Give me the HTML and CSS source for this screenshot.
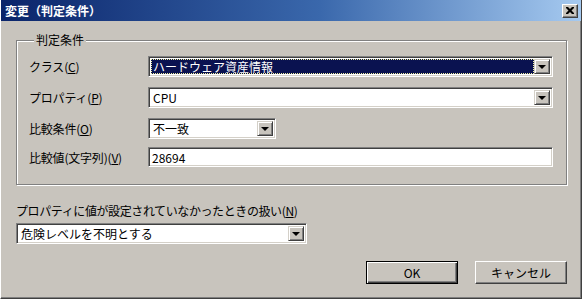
FILE: index.html
```html
<!DOCTYPE html>
<html lang="ja">
<head>
    <meta charset="UTF-8">
    <title>変更(判定条件)</title>
    <link rel="stylesheet" href="styles.css">
</head>
<body>
    <div class="window">
        <div class="titlebar">
            <span class="title">変更（判定条件）</span>
            <span class="close-btn">
                <svg width="8" height="7" viewBox="0 0 8 7"><path d="M0 0h2l2 2 2-2h2v1l-2.5 2.5L8 6v1H6L4 5 2 7H0V6l2.5-2.5L0 1z" fill="#000"/></svg>
            </span>
        </div>
        <div class="content">
            <fieldset class="group">
                <legend>判定条件</legend>
                <div class="form-grid">
                    <label>クラス(<u>C</u>)</label>
                    <div class="combo">
                        <span class="combo-text selected">ハードウェア資産情報</span>
                        <span class="combo-btn"><i class="arrow"></i></span>
                    </div>

                    <label>プロパティ(<u>P</u>)</label>
                    <div class="combo">
                        <span class="combo-text">CPU</span>
                        <span class="combo-btn"><i class="arrow"></i></span>
                    </div>

                    <label>比較条件(<u>O</u>)</label>
                    <div class="combo combo-short">
                        <span class="combo-text">不一致</span>
                        <span class="combo-btn"><i class="arrow"></i></span>
                    </div>

                    <label>比較値(文字列)(<u>V</u>)</label>
                    <div class="textbox">28694</div>
                </div>
            </fieldset>

            <div class="fallback">
                <label>プロパティに値が設定されていなかったときの扱い(<u>N</u>)</label>
                <div class="combo combo-fallback">
                    <span class="combo-text">危険レベルを不明とする</span>
                    <span class="combo-btn"><i class="arrow"></i></span>
                </div>
            </div>

            <div class="actions">
                <span class="btn btn-default">OK</span>
                <span class="btn">キャンセル</span>
            </div>
        </div>
    </div>
</body>
</html>
```

FILE: styles.css
```css
body { margin: 0; background: #c8c4bd; font-family: "Noto Sans CJK JP", "Liberation Sans", sans-serif; font-size: 12px; color: #000; }
.window { box-sizing: border-box; width: 582px; height: 299px; background: #c8c4bd; border-left: 1px solid #fff; border-right: 1px solid #404040; border-bottom: 1px solid #404040; box-shadow: inset -1px -1px #808080; display: flex; flex-direction: column; }
.titlebar { height: 21px; display: flex; align-items: center; justify-content: space-between; padding: 0 3px 0 4px; background: linear-gradient(to right, #0a246a, #3a68ac 55%, #a6caf0); }
.title { color: #fff; font-weight: bold; font-size: 12px; }
.close-btn { box-sizing: border-box; width: 16px; height: 14px; display: flex; align-items: center; justify-content: center; background: #c8c4bd; border: 1px solid; border-color: #fff #404040 #404040 #fff; box-shadow: inset -1px -1px #808080; }

.content { flex: 1; padding: 12px 14px 0 15px; display: flex; flex-direction: column; }

.group { margin: 0; padding: 9px 13px 17px 12px; border: 1px solid #808080; box-shadow: inset 1px 1px #fff, 1px 1px #fff; }
.group legend { padding: 0 2px; margin-left: 5px; line-height: 14px; background: #c8c4bd; }

.form-grid { display: grid; grid-template-columns: 119px 1fr; row-gap: 10px; align-items: center; }
.form-grid label { line-height: 14px; letter-spacing: -0.2px; }

.combo { box-sizing: border-box; height: 21px; display: flex; background: #fff; border: 1px solid; border-color: #808080 #fff #fff #808080; box-shadow: inset 1px 1px #404040, inset -1px -1px #d4d0c8; padding: 2px; }
.combo-short { width: 128px; }
.combo-text { flex: 1; line-height: 15px; padding: 0 2px; white-space: nowrap; overflow: hidden; }
.combo-text.selected { background: #0a1250; color: #fff; outline: 1px dotted #f0f0a0; outline-offset: -1px; }
.combo-btn { box-sizing: border-box; width: 16px; height: 15px; display: flex; align-items: center; justify-content: center; background: #c8c4bd; border: 1px solid; border-color: #d4d0c8 #404040 #404040 #d4d0c8; box-shadow: inset 1px 1px #fff, inset -1px -1px #808080; }
.arrow { width: 0; height: 0; border-left: 4px solid transparent; border-right: 4px solid transparent; border-top: 4px solid #000; margin-top: 1px; }

.textbox { box-sizing: border-box; height: 20px; background: #fff; border: 1px solid; border-color: #808080 #fff #fff #808080; box-shadow: inset 1px 1px #404040, inset -1px -1px #d4d0c8; padding: 2px 2px 0 3px; line-height: 15px; margin-top: -2px; }

.fallback { margin-top: 19px; display: flex; flex-direction: column; gap: 5px; }
.fallback label { line-height: 14px; letter-spacing: -0.4px; }
.combo-fallback { width: 291px; }

.actions { margin-top: 17px; display: flex; justify-content: flex-end; gap: 17px; }
.btn { box-sizing: border-box; width: 92px; height: 23px; display: flex; align-items: center; justify-content: center; background: #c8c4bd; border: 1px solid; border-color: #fff #404040 #404040 #fff; box-shadow: inset -1px -1px #808080; }
.btn-default { border-color: #000; box-shadow: inset 1px 1px #fff, inset -1px -1px #404040, inset -2px -2px #808080; }
```
